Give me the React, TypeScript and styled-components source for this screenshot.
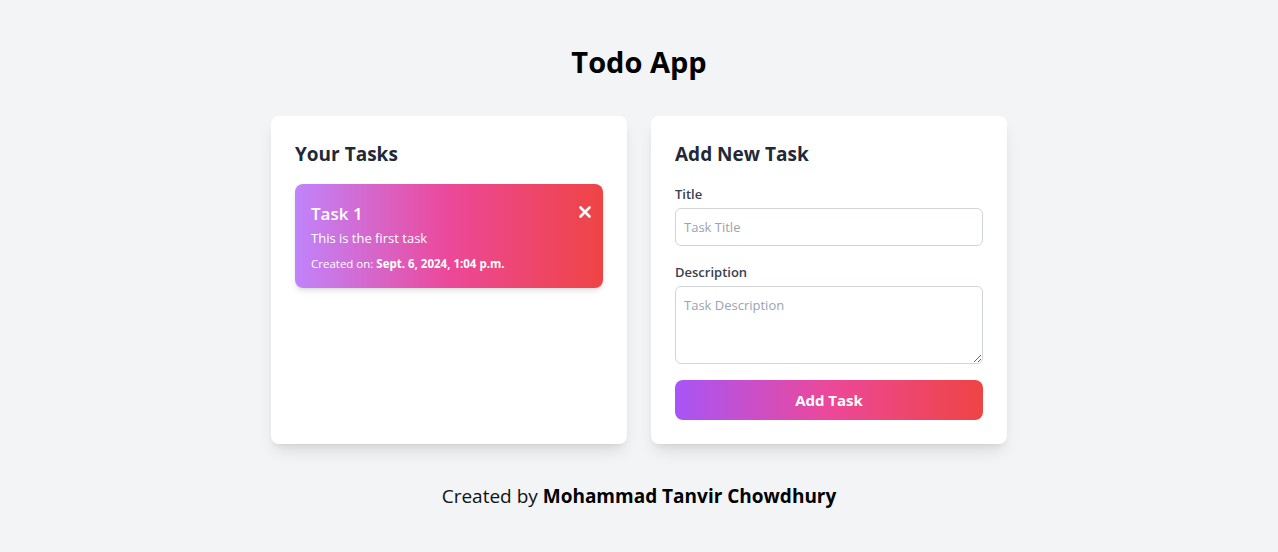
import React from "react";
import styled, { createGlobalStyle } from "styled-components";

const Global = createGlobalStyle`
  html, body { margin: 0; padding: 0; }
  body {
    background: #f3f4f6;
    font-family: "Open Sans", "Noto Sans", sans-serif;
    color: #111827;
  }
  * { box-sizing: border-box; }
`;

const Page = styled.div`
  min-height: 552px;
  padding-top: 44px;
`;

const Heading = styled.h1`
  margin: 0 0 36px;
  text-align: center;
  font-size: 29px;
  line-height: 36px;
  font-weight: 700;
  color: #000;
`;

const Container = styled.div`
  max-width: 768px;
  margin: 0 auto;
  padding: 0 16px;
  display: grid;
  grid-template-columns: 1fr 1fr;
  gap: 24px;
`;

const Card = styled.section`
  background: #fff;
  border-radius: 8px;
  padding: 24px;
  box-shadow: 0 10px 15px -3px rgba(0, 0, 0, 0.1), 0 4px 6px -4px rgba(0, 0, 0, 0.1);
  min-height: 328px;
`;

const CardTitle = styled.h2`
  margin: 0 0 16px;
  font-size: 19px;
  line-height: 28px;
  font-weight: 700;
  color: #1f2937;
`;

const TaskItem = styled.div`
  position: relative;
  border-radius: 8px;
  padding: 16px;
  color: #fff;
  background: linear-gradient(to right, #c084fc, #ec4899, #ef4444);
  box-shadow: 0 4px 6px -1px rgba(0, 0, 0, 0.1), 0 2px 4px -2px rgba(0, 0, 0, 0.1);
`;

const TaskTitle = styled.h3`
  margin: 0;
  font-size: 17px;
  line-height: 28px;
  font-weight: 600;
`;

const TaskDesc = styled.p`
  margin: 0;
  font-size: 13px;
  line-height: 20px;
`;

const TaskMeta = styled.p`
  margin: 8px 0 0;
  font-size: 11.5px;
  line-height: 16px;
  strong { font-weight: 700; }
`;

const CloseButton = styled.button`
  position: absolute;
  top: 20px;
  right: 10px;
  width: 16px;
  height: 16px;
  padding: 0;
  border: 0;
  background: transparent;
  color: #fff;
  display: flex;
  align-items: center;
  justify-content: center;
  cursor: pointer;
`;

const Field = styled.div<{ $mb?: number }>`
  margin-bottom: ${(p) => p.$mb ?? 16}px;
`;

const Label = styled.label`
  display: block;
  margin-bottom: 4px;
  font-size: 13px;
  line-height: 20px;
  font-weight: 600;
  color: #374151;
`;

const inputStyles = `
  width: 100%;
  border: 1px solid #d1d5db;
  border-radius: 6px;
  padding: 8px;
  font-family: inherit;
  font-size: 13px;
  line-height: 20px;
  color: #111827;
  background: #fff;
  &::placeholder { color: #9ca3af; }
  &:focus { outline: none; }
`;

const Input = styled.input`
  ${inputStyles}
  height: 38px;
  display: block;
`;

const TextArea = styled.textarea`
  ${inputStyles}
  display: block;
  height: 78px;
`;

const SubmitButton = styled.button`
  width: 100%;
  height: 40px;
  border: 0;
  border-radius: 8px;
  color: #fff;
  font-family: inherit;
  font-size: 15px;
  font-weight: 700;
  background: linear-gradient(to right, #a855f7, #ec4899, #ef4444);
  cursor: pointer;
`;

const Footer = styled.footer`
  margin-top: 38px;
  text-align: center;
  font-size: 19px;
  line-height: 28px;
  color: #111;
  strong { font-weight: 700; color: #000; }
`;

export default function App() {
  return (
    <>
      <Global />
      <Page>
        <Heading>Todo App</Heading>
        <Container>
          <Card>
            <CardTitle>Your Tasks</CardTitle>
            <TaskItem>
              <TaskTitle>Task 1</TaskTitle>
              <TaskDesc>This is the first task</TaskDesc>
              <TaskMeta>
                Created on: <strong>Sept. 6, 2024, 1:04 p.m.</strong>
              </TaskMeta>
              <CloseButton aria-label="Delete">
                <svg width="12" height="12" viewBox="0 0 12 12">
                  <path d="M1.5 1.5 L10.5 10.5 M10.5 1.5 L1.5 10.5" stroke="#fff" strokeWidth="2.6" strokeLinecap="round" />
                </svg>
              </CloseButton>
            </TaskItem>
          </Card>
          <Card>
            <CardTitle>Add New Task</CardTitle>
            <Field>
              <Label>Title</Label>
              <Input placeholder="Task Title" />
            </Field>
            <Field>
              <Label>Description</Label>
              <TextArea placeholder="Task Description" />
            </Field>
            <SubmitButton>Add Task</SubmitButton>
          </Card>
        </Container>
        <Footer>
          Created by <strong>Mohammad Tanvir Chowdhury</strong>
        </Footer>
      </Page>
    </>
  );
}
